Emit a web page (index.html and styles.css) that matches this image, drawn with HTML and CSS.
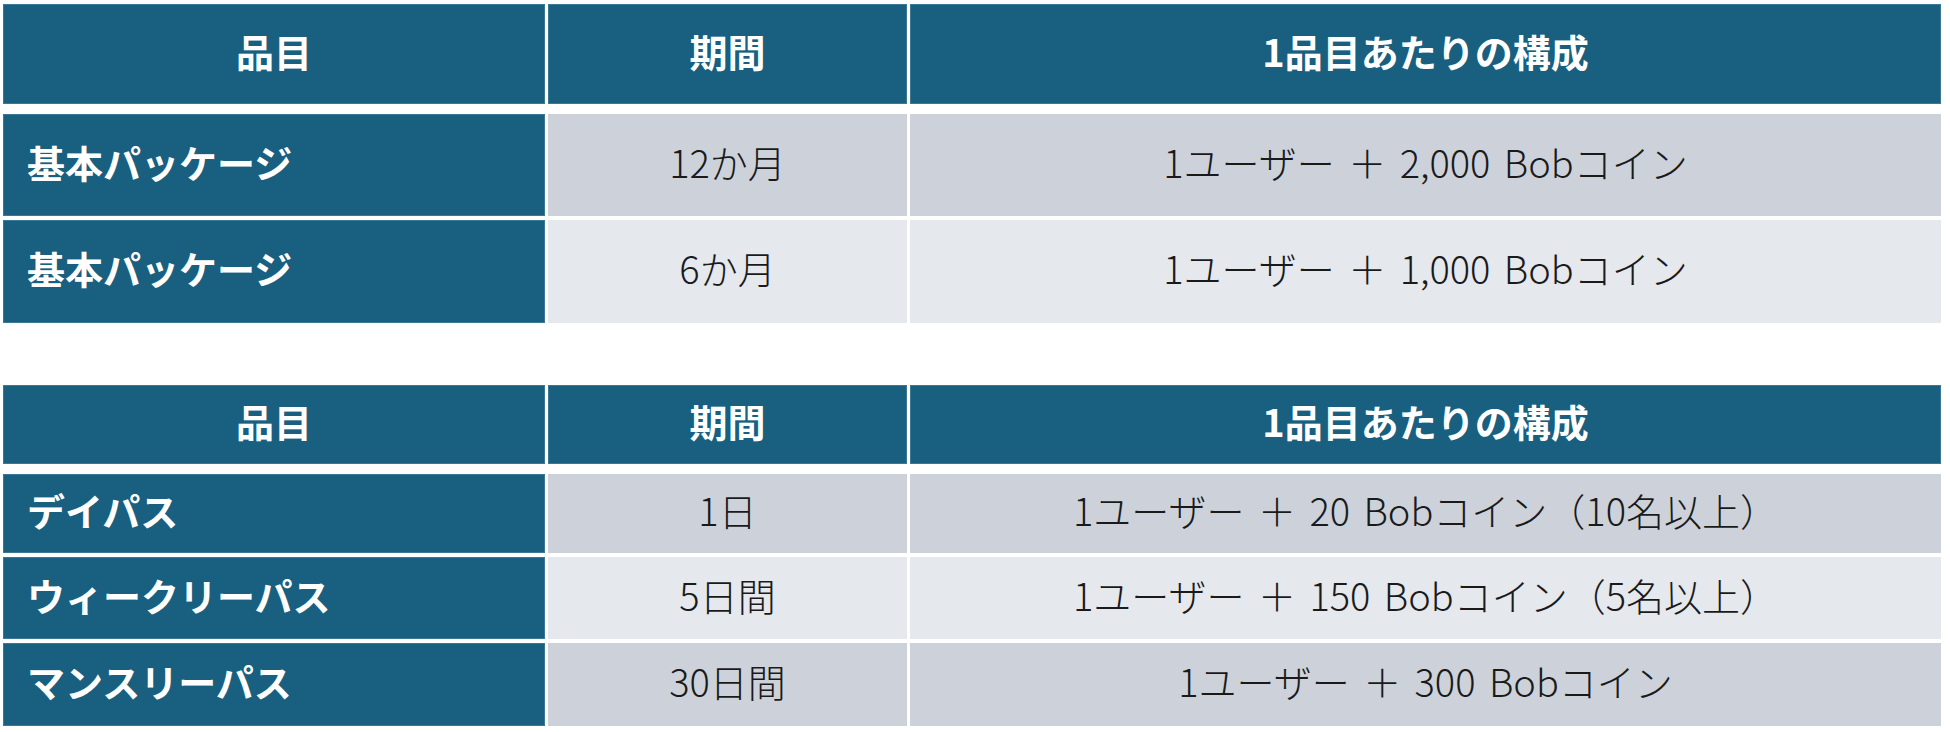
FILE: index.html
```html
<!DOCTYPE html>
<html lang="ja">
<head>
<meta charset="utf-8">
<title>料金表</title>
<link rel="stylesheet" href="styles.css">
</head>
<body>
<div class="page">
  <div class="table t1">
    <div class="cell head">品目</div>
    <div class="cell head">期間</div>
    <div class="cell head">1品目あたりの構成</div>
    <div class="spacer"></div>
    <div class="cell name">基本パッケージ</div>
    <div class="cell val odd">12か月</div>
    <div class="cell val odd">1ユーザー ＋ 2,000 Bobコイン</div>
    <div class="cell name">基本パッケージ</div>
    <div class="cell val even">6か月</div>
    <div class="cell val even">1ユーザー ＋ 1,000 Bobコイン</div>
  </div>
  <div class="table t2">
    <div class="cell head">品目</div>
    <div class="cell head">期間</div>
    <div class="cell head">1品目あたりの構成</div>
    <div class="spacer"></div>
    <div class="cell name">デイパス</div>
    <div class="cell val odd">1日</div>
    <div class="cell val odd">1ユーザー ＋ 20 Bobコイン（10名以上）</div>
    <div class="cell name">ウィークリーパス</div>
    <div class="cell val even">5日間</div>
    <div class="cell val even">1ユーザー ＋ 150 Bobコイン（5名以上）</div>
    <div class="cell name">マンスリーパス</div>
    <div class="cell val odd">30日間</div>
    <div class="cell val odd">1ユーザー ＋ 300 Bobコイン</div>
  </div>
</div>
</body>
</html>
```

FILE: styles.css
```css
html, body {
  margin: 0;
  padding: 0;
  background: #ffffff;
}

.page {
  padding: 4px 0 0 3px;
  display: flex;
  flex-direction: column;
  gap: 62px;
  font-family: "Noto Sans CJK JP", "Noto Sans", sans-serif;
}

.table {
  display: grid;
  grid-template-columns: 542px 359px 1031px;
  column-gap: 3px;
  row-gap: 4px;
}

.t1 {
  grid-template-rows: 100px 2px 102px 103px;
}

.t2 {
  grid-template-rows: 79px 2px 79px 82px 83px;
}

.spacer {
  grid-column: 1 / -1;
}

.cell {
  display: flex;
  align-items: center;
  justify-content: center;
  font-size: 38px;
  line-height: 1;
  white-space: nowrap;
  box-sizing: border-box;
  padding-bottom: 7px;
}

.head {
  background: #185f80;
  color: #ffffff;
  font-weight: 700;
  box-shadow: inset 0 0 0 1px #3a7896;
}

.name {
  background: #185f80;
  color: #ffffff;
  font-weight: 700;
  justify-content: flex-start;
  padding-left: 24px;
  box-shadow: inset 0 0 0 1px #3a7896;
}

.val {
  color: #1a1a1a;
  font-weight: 300;
  word-spacing: 5px;
}

.odd {
  background: #cdd2da;
}

.even {
  background: #e5e8ec;
}
```
